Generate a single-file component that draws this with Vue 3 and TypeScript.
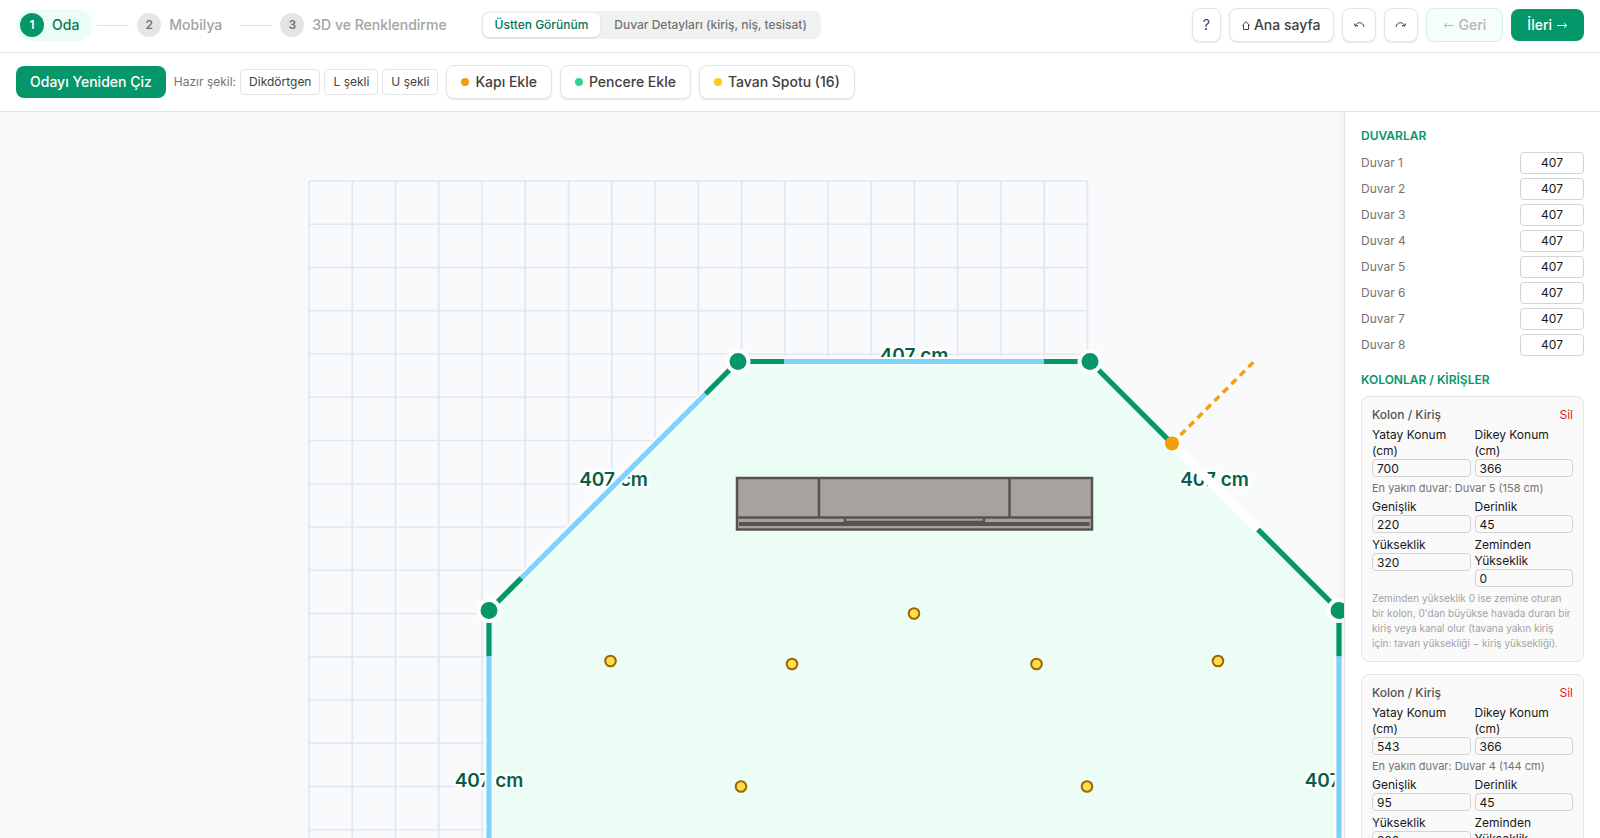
<script setup lang="ts">
import { reactive, ref } from 'vue'

interface Point { x: number; y: number }
interface Column { x: number; y: number; near: string; width: number; depth: number; height: number; floor: number }

const steps = ['Oda', 'Mobilya', '3D ve Renklendirme']
const presets = ['Dikdörtgen', 'L şekli', 'U şekli']
const tools = [
  { label: 'Kapı Ekle', kind: 'door' },
  { label: 'Pencere Ekle', kind: 'window' },
  { label: 'Tavan Spotu (16)', kind: 'spot' },
]
const view = ref<'top' | 'walls'>('top')
const walls = reactive<number[]>(Array(8).fill(407))
const columns = reactive<Column[]>([
  { x: 700, y: 366, near: 'Duvar 5 (158 cm)', width: 220, depth: 45, height: 320, floor: 0 },
  { x: 543, y: 366, near: 'Duvar 4 (144 cm)', width: 95, depth: 45, height: 320, floor: 0 },
])

const gridX = Array.from({ length: 19 }, (_, i) => 309 + i * 43.25)
const gridY = Array.from({ length: 19 }, (_, i) => 181 + i * 43.25)

const corners: Point[] = [
  { x: 738, y: 361.5 }, { x: 1090, y: 361.5 }, { x: 1339, y: 610.5 }, { x: 1339, y: 962.5 },
  { x: 1090, y: 1211.5 }, { x: 738, y: 1211.5 }, { x: 489, y: 962.5 }, { x: 489, y: 610.5 },
]
const outline = corners.map((p) => `${p.x},${p.y}`).join(' ')
const labels = corners.map((p, i) => {
  const q = corners[(i + 1) % corners.length]
  return { x: (p.x + q.x) / 2, y: (p.y + q.y) / 2 }
})
const windows = [
  { x1: 784, y1: 361.5, x2: 1044, y2: 361.5 },
  { x1: 521.5, y1: 578, x2: 705.5, y2: 394 },
  { x1: 489, y1: 656.5, x2: 489, y2: 916.5 },
  { x1: 1339, y1: 656.5, x2: 1339, y2: 916.5 },
]
const spots: Point[] = [
  { x: 914, y: 613.5 }, { x: 610.5, y: 661 }, { x: 792, y: 664 }, { x: 1036.5, y: 664 },
  { x: 1218, y: 661 }, { x: 741, y: 786.5 }, { x: 1087, y: 786.5 },
]
</script>

<template>
  <div class="app">
    <header class="topbar">
      <nav class="steps" aria-label="Adımlar">
        <template v-for="(step, i) in steps" :key="step">
          <span v-if="i" class="connector"></span>
          <button type="button" class="step" :class="{ current: i === 0 }">
            <span class="number">{{ i + 1 }}</span>{{ step }}
          </button>
        </template>
      </nav>
      <div class="tabs">
        <button type="button" :class="{ active: view === 'top' }" @click="view = 'top'">Üstten Görünüm</button>
        <button type="button" :class="{ active: view === 'walls' }" @click="view = 'walls'">Duvar Detayları (kiriş, niş, tesisat)</button>
      </div>
      <div class="actions">
        <button type="button" class="btn small">?</button>
        <button type="button" class="btn snug">
          <svg class="icon" width="8" height="20" viewBox="0 0 8 20" aria-hidden="true">
            <path d="M1.500 10V14.500H6.500V10M.500 10.500L4 6.500L7.500 10.500" />
          </svg>
          Ana sayfa
        </button>
        <button type="button" class="btn small" aria-label="Geri al">
          <svg class="icon" width="12" height="20" viewBox="0 0 12 20" aria-hidden="true">
            <path d="M2.500 11C3.200 8.600 5 7.600 6.800 7.700C9 7.800 10.700 9.300 10.800 11.800M1.300 8.600L2.400 11.300L5 10.300" />
          </svg>
        </button>
        <button type="button" class="btn small" aria-label="Yinele">
          <svg class="icon" width="12" height="20" viewBox="0 0 12 20" aria-hidden="true">
            <path d="M9.500 11C8.800 8.600 7 7.600 5.200 7.700C3 7.800 1.300 9.300 1.200 11.800M10.700 8.600L9.600 11.300L7 10.300" />
          </svg>
        </button>
        <button type="button" class="btn back" disabled>
          <svg class="icon" width="12" height="20" viewBox="0 0 12 20" aria-hidden="true">
            <path d="M11 10.500H1.500M3.800 8.200L1.300 10.500L3.800 12.800" />
          </svg>
          Geri
        </button>
        <button type="button" class="btn primary">
          İleri
          <svg class="icon" width="12" height="20" viewBox="0 0 12 20" aria-hidden="true">
            <path d="M1 10.500H10.500M8.200 8.200L10.700 10.500L8.200 12.800" />
          </svg>
        </button>
      </div>
    </header>

    <div class="toolbar">
      <button type="button" class="btn primary redraw">Odayı Yeniden Çiz</button>
      <div class="presets">
        <span>Hazır şekil:</span>
        <button v-for="p in presets" :key="p" type="button">{{ p }}</button>
      </div>
      <button v-for="t in tools" :key="t.kind" type="button" class="btn tool">
        <span class="dot" :class="t.kind"></span>{{ t.label }}
      </button>
    </div>

    <div class="workspace">
      <main class="canvas">
        <svg viewBox="0 112 1344 726" preserveAspectRatio="xMinYMin slice">
          <g class="grid">
            <line v-for="x in gridX" :key="'x' + x" :x1="x" y1="181" :x2="x" y2="959.5" />
            <line v-for="y in gridY" :key="'y' + y" x1="309" :y1="y" x2="1087.5" :y2="y" />
          </g>
          <polygon class="room" :points="outline" />
          <text v-for="(l, i) in labels" :key="'l' + i" class="length" :x="l.x" :y="l.y">{{ walls[i] }} cm</text>
          <g v-for="(w, i) in windows" :key="'w' + i">
            <line class="gap" v-bind="w" />
            <line class="pane" v-bind="w" />
          </g>
          <line class="gap" x1="1172" y1="443.5" x2="1258" y2="529.5" />
          <line class="swing" x1="1172" y1="443.5" x2="1254" y2="361.5" />
          <circle class="hinge" cx="1172" cy="443.5" r="7" />
          <g class="cabinet">
            <rect x="737" y="478" width="355" height="51.500" />
            <path d="M737 517.5H1092M819 478V517M1009.500 478V517M845 518V522M984 518V522" />
            <path class="rail" d="M739 524H1089.500" />
            <path d="M845 522H984" />
          </g>
          <circle v-for="(s, i) in spots" :key="'s' + i" class="spot" :cx="s.x" :cy="s.y" r="5.300" />
          <circle v-for="(c, i) in corners" :key="'c' + i" class="corner" :cx="c.x" :cy="c.y" r="10.500" />
        </svg>
      </main>

      <aside class="panel">
        <h2>DUVARLAR</h2>
        <div class="walls">
          <label v-for="(_, i) in walls" :key="i">
            Duvar {{ i + 1 }}
            <input v-model.number="walls[i]" type="text" inputmode="numeric" />
          </label>
        </div>
        <h2>KOLONLAR / KİRİŞLER</h2>
        <section v-for="(c, i) in columns" :key="i" class="card">
          <div class="card-head">
            <span>Kolon / Kiriş</span>
            <button type="button">Sil</button>
          </div>
          <div class="fields">
            <label>Yatay Konum (cm)<input v-model.number="c.x" type="text" inputmode="numeric" /></label>
            <label>Dikey Konum (cm)<input v-model.number="c.y" type="text" inputmode="numeric" /></label>
          </div>
          <p class="near">En yakın duvar: {{ c.near }}</p>
          <div class="fields">
            <label>Genişlik<input v-model.number="c.width" type="text" inputmode="numeric" /></label>
            <label>Derinlik<input v-model.number="c.depth" type="text" inputmode="numeric" /></label>
            <label>Yükseklik<input v-model.number="c.height" type="text" inputmode="numeric" /></label>
            <label>Zeminden Yükseklik<input v-model.number="c.floor" type="text" inputmode="numeric" /></label>
          </div>
          <p class="hint">Zeminden yükseklik 0 ise zemine oturan bir kolon, 0'dan büyükse havada duran bir kiriş veya kanal olur (tavana yakın kiriş için: tavan yüksekliği − kiriş yüksekliği).</p>
        </section>
      </aside>
    </div>
  </div>
</template>

<style>
body { margin: 0; }
</style>

<style scoped>
.app {
  display: flex;
  flex-direction: column;
  height: 100vh;
  overflow: hidden;
  background: #fff;
  color: #171717;
  font: 14px/20px Inter, "Noto Sans", "DejaVu Sans", sans-serif;
}
.app * { box-sizing: border-box; }
button, input { font: inherit; color: inherit; }
button { margin: 0; padding: 0; border: 0; background: none; white-space: nowrap; cursor: pointer; }

.topbar {
  display: flex;
  align-items: center;
  flex: none;
  gap: 20px;
  padding: 8px 16px 10px;
  border-bottom: 1px solid #e5e5e5;
}
.steps { display: flex; align-items: center; gap: 4px; }
.step {
  display: flex;
  align-items: center;
  gap: 8px;
  padding: 4px 14px 4px 4px;
  border-radius: 16px;
  color: #a3a3a3;
  font-weight: 500;
}
.step.current { background: #ecfdf5; color: #047857; }
.number {
  width: 24px;
  border-radius: 12px;
  background: #e5e5e5;
  color: #737373;
  font-size: 12px;
  font-weight: 600;
  line-height: 24px;
  text-align: center;
}
.current .number { background: #059669; color: #fff; }
.connector { width: 32px; height: 1px; background: #e0e0e0; }

.tabs { display: flex; gap: 2px; padding: 2px; border-radius: 8px; background: #f0f1f1; }
.tabs button {
  padding: 4px 12px;
  border-radius: 6px;
  color: #737373;
  font-size: 12px;
  font-weight: 500;
  line-height: 16px;
}
.tabs button.active { background: #fff; color: #047857; box-shadow: 0 1px 2px #0000001f; }

.actions { display: flex; align-items: center; gap: 8px; margin-left: auto; }
.btn {
  display: flex;
  align-items: center;
  gap: 4px;
  padding: 6px 14px;
  border: 1px solid #e5e5e5;
  border-radius: 8px;
  background: #fff;
  color: #404040;
  font-weight: 500;
  box-shadow: 0 1px 2px #0000001a;
}
.icon { display: block; fill: none; stroke: currentColor; stroke-width: 1; }
.snug { padding: 6px 12px; }
.small { padding: 6px 10px; font-weight: 400; }
.primary { padding: 6px 14px; border: 0; background: #059669; color: #fff; box-shadow: none; }
.actions .primary { padding: 6px 16px; }
.back { padding: 6px 16px; border-color: #d1f1e3; background: #f6fefa; color: #b3b8b6; box-shadow: none; }

.toolbar {
  display: flex;
  align-items: center;
  flex: none;
  gap: 8px;
  padding: 12px 16px;
  border-bottom: 1px solid #e5e5e5;
}
.presets { display: flex; align-items: center; gap: 4px; color: #737373; font-size: 12px; }
.presets button {
  padding: 4px 8px;
  border: 1px solid #e5e5e5;
  border-radius: 4px;
  color: #404040;
  line-height: 16px;
}
.tool { gap: 6px; }
.dot { width: 8px; height: 8px; border-radius: 4px; }
.dot.door { background: #f59e0b; }
.dot.window { background: #34d399; }
.dot.spot { background: #facc15; }

.workspace { display: flex; flex: 1; min-height: 0; }
.canvas { flex: 1; min-width: 0; overflow: hidden; background: #f8fafc; }
.canvas svg { display: block; width: 100%; height: 100%; }
.grid line { stroke: #e2e8f0; stroke-width: 1.7; }
.room { fill: #ecfdf5; stroke: #059669; stroke-width: 5.2; }
.length {
  fill: #065f46;
  stroke: #fff;
  stroke-width: 5;
  stroke-linejoin: round;
  paint-order: stroke;
  font-size: 19px;
  font-weight: 600;
  text-anchor: middle;
}
.gap { stroke: #fff; stroke-width: 9; }
.pane { stroke: #7dd3fc; stroke-width: 5.2; }
.swing { stroke: #f59e0b; stroke-width: 3.5; stroke-dasharray: 7 5; }
.hinge { fill: #f59e0b; }
.cabinet { fill: #a8a29e; stroke: #57534e; stroke-width: 2.5; }
.cabinet path { fill: none; }
.cabinet .rail { stroke-width: 4; }
.spot { fill: #fde047; stroke: #a16207; stroke-width: 2; }
.corner { fill: #059669; stroke: #fff; stroke-width: 4; }

.panel {
  flex: none;
  width: 256px;
  padding: 16px;
  overflow: hidden;
  border-left: 1px solid #e5e5e5;
  box-shadow: -4px 0 12px #00000008;
  font-size: 12px;
  line-height: 16px;
}
h2 { margin: 0 0 8px; color: #059669; font-size: 12px; font-weight: 600; line-height: 16px; }
.walls { display: flex; flex-direction: column; gap: 4px; margin-bottom: 16px; }
.walls label { display: flex; align-items: center; justify-content: space-between; color: #737373; }
.panel input {
  display: block;
  border: 1px solid #d4d4d4;
  border-radius: 4px;
  background: transparent;
  color: #171717;
  outline: 0;
}
.walls input { width: 64px; height: 22px; padding: 1px 4px 3px; text-align: center; }
.card {
  margin-bottom: 12px;
  padding: 10px;
  border: 1px solid #e5e5e5;
  border-radius: 8px;
  background: #fafafa;
}
.card-head { display: flex; justify-content: space-between; margin-bottom: 4px; color: #525252; font-weight: 500; }
.card-head button { color: #dc2626; font-weight: 400; }
.fields { display: grid; grid-template-columns: 1fr 1fr; gap: 4px; }
.fields input { width: 100%; height: 18px; padding: 0 4px; }
.near { margin: 3px 0; color: #737373; font-size: 11px; }
.hint { margin: 4px 0 0; color: #a3a3a3; font-size: 10px; line-height: 15px; }
</style>
